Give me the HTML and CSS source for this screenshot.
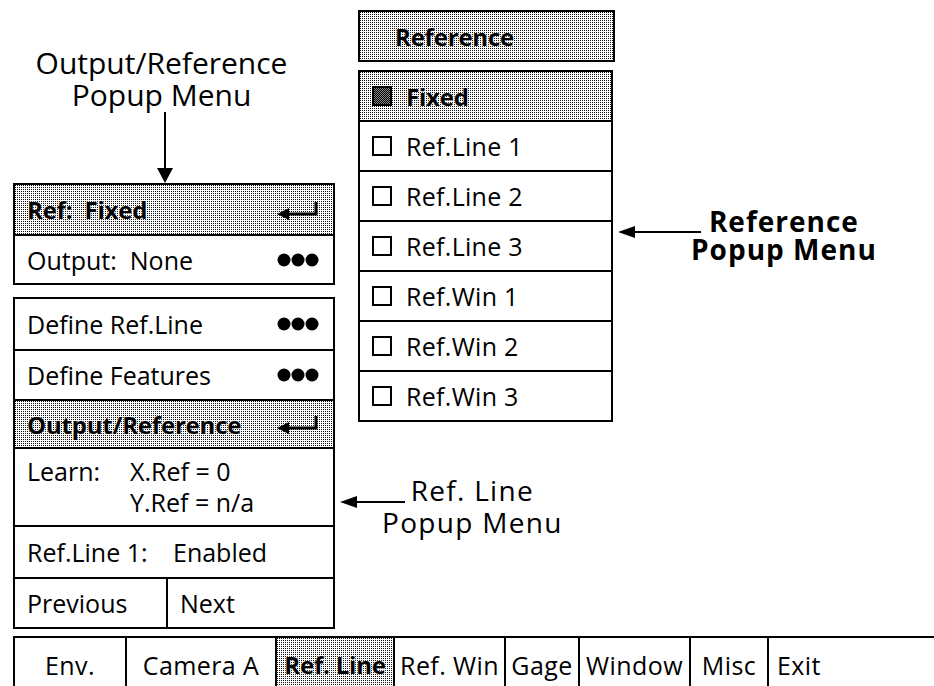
FILE: index.html
```html
<!DOCTYPE html>
<html>
<head>
<meta charset="utf-8">
<link rel="stylesheet" href="styles.css">
</head>
<body>
<div class="page">
  <div class="top">
    <div class="left">
      <div class="label-top">Output/Reference<br>Popup Menu</div>
      <svg class="down-arrow" width="16" height="71" viewBox="0 0 16 71"><path d="M8 0V58" stroke="#000" stroke-width="2"/><path d="M0 56H16L8 71Z"/></svg>
      <div class="panel">
        <div class="row shade bold h47"><span>Ref:&nbsp; Fixed</span>
          <svg class="ret" width="44" height="22" viewBox="0 0 44 22"><path d="M10 15H39V3" fill="none" stroke="#000" stroke-width="3"/><path d="M0 15L12 9V21Z"/></svg>
        </div>
        <div class="row sep h47"><span>Output:&nbsp; None</span>
          <svg class="dots" width="42" height="14" viewBox="0 0 42 14"><circle cx="7" cy="7" r="6.5"/><circle cx="21" cy="7" r="6.5"/><circle cx="35" cy="7" r="6.5"/></svg>
        </div>
      </div>
      <div class="panel p2">
        <div class="row h48"><span>Define Ref.Line</span>
          <svg class="dots" width="42" height="14" viewBox="0 0 42 14"><circle cx="7" cy="7" r="6.5"/><circle cx="21" cy="7" r="6.5"/><circle cx="35" cy="7" r="6.5"/></svg>
        </div>
        <div class="row sep h48"><span>Define Features</span>
          <svg class="dots" width="42" height="14" viewBox="0 0 42 14"><circle cx="7" cy="7" r="6.5"/><circle cx="21" cy="7" r="6.5"/><circle cx="35" cy="7" r="6.5"/></svg>
        </div>
        <div class="row sep shade bold h46"><span>Output/Reference</span>
          <svg class="ret" width="44" height="22" viewBox="0 0 44 22"><path d="M10 15H39V3" fill="none" stroke="#000" stroke-width="3"/><path d="M0 15L12 9V21Z"/></svg>
        </div>
        <div class="learn sep">
          <span>Learn:</span><span>X.Ref = 0</span>
          <span></span><span>Y.Ref = n/a</span>
        </div>
        <div class="row start sep h50"><span class="key">Ref.Line 1:</span><span>Enabled</span></div>
        <div class="split sep">
          <div class="half">Previous</div>
          <div class="half">Next</div>
        </div>
      </div>
    </div>
    <div class="mid">
      <div class="ref-head shade bold">Reference</div>
      <div class="menu-row">
        <div class="menu">
          <div class="item shade bold first"><span class="box dark"></span>Fixed</div>
          <div class="item"><span class="box"></span>Ref.Line 1</div>
          <div class="item"><span class="box"></span>Ref.Line 2</div>
          <div class="item"><span class="box"></span>Ref.Line 3</div>
          <div class="item"><span class="box"></span>Ref.Win 1</div>
          <div class="item"><span class="box"></span>Ref.Win 2</div>
          <div class="item"><span class="box"></span>Ref.Win 3</div>
        </div>
        <div class="callout callout-ref">
          <svg class="h-arrow" width="83" height="14" viewBox="0 0 83 14"><path d="M12 7H83" stroke="#000" stroke-width="2"/><path d="M0 7L17 1V13Z"/></svg>
          <div class="callout-text bold">Reference<br>Popup Menu</div>
        </div>
      </div>
      <div class="callout callout-line">
        <svg class="h-arrow" width="65" height="14" viewBox="0 0 65 14"><path d="M12 7H65" stroke="#000" stroke-width="2"/><path d="M0 7L17 1V13Z"/></svg>
        <div class="callout-text">Ref. Line<br>Popup Menu</div>
      </div>
    </div>
  </div>
  <div class="tabs">
    <div class="tab">Env.</div>
    <div class="tab">Camera A</div>
    <div class="tab shade bold">Ref. Line</div>
    <div class="tab">Ref. Win</div>
    <div class="tab">Gage</div>
    <div class="tab">Window</div>
    <div class="tab">Misc</div>
    <div class="tab exit">Exit</div>
  </div>
</div>
</body>
</html>
```

FILE: styles.css
```css
html, body {
  margin: 0;
  padding: 0;
  background: #fff;
  overflow: hidden;
}
body {
  font-family: "Open Sans", "Liberation Sans", sans-serif;
  font-size: 25px;
  font-weight: 500;
  color: #000;
  width: 934px;
  height: 686px;
}
* { box-sizing: border-box; }

.shade {
  background-color: #fff;
  background-image: conic-gradient(from 270deg at 1px 1px, #111 90deg, #fff 0);
  background-size: 2px 2px;
}
.bold {
  font-weight: 700;
  font-size: 24px;
  letter-spacing: -0.2px;
  text-shadow: 0 0 1px #fff, 0 0 1px #fff;
}

.top {
  display: flex;
  padding-left: 13px;
  height: 636px;
}

.left {
  width: 322px;
  display: flex;
  flex-direction: column;
}
.label-top {
  width: 297px;
  text-align: center;
  font-size: 30px;
  line-height: 32px;
  padding-top: 47px;
  height: 112px;
}
.down-arrow {
  display: block;
  margin-left: 144px;
}

.panel {
  border: 2px solid #000;
  width: 322px;
}
.p2 { margin-top: 12px; }

.row {
  display: flex;
  align-items: center;
  justify-content: space-between;
  padding: 0 14px 0 12px;
}
.row.start { justify-content: flex-start; }
.key { width: 146px; }
.sep { border-top: 2px solid #000; }
.h46 { height: 48px; }
.h47 { height: 49px; }
.h48 { height: 50px; }
.h50 { height: 52px; }
.ret { margin-right: -2px; }

.learn {
  display: grid;
  grid-template-columns: 103px 1fr;
  align-content: center;
  padding: 0 12px;
  height: 78px;
  line-height: 31px;
}

.split {
  display: flex;
  height: 50px;
}
.half {
  display: flex;
  align-items: center;
  padding-left: 12px;
}
.half:first-child {
  width: 153px;
  border-right: 2px solid #000;
}

.mid {
  display: flex;
  flex-direction: column;
  padding-top: 10px;
}
.ref-head {
  margin-left: 23px;
  width: 257px;
  height: 52px;
  border: 2px solid #000;
  display: flex;
  align-items: center;
  padding-left: 35px;
}
.menu-row {
  display: flex;
  margin-top: 8px;
  margin-left: 23px;
}
.menu {
  width: 255px;
  border: 2px solid #000;
  letter-spacing: 0.3px;
}
.item {
  display: flex;
  align-items: center;
  height: 50px;
  border-top: 2px solid #000;
  padding-left: 12px;
}
.item.first {
  border-top: none;
  height: 48px;
}
.box {
  width: 20px;
  height: 20px;
  border: 2px solid #000;
  margin-right: 14px;
  flex: none;
}
.box.dark {
  background-image: repeating-conic-gradient(#000 0 25%, #888 0 50%);
  background-size: 2px 2px;
}

.callout {
  display: flex;
  align-items: flex-start;
}
.h-arrow {
  flex: none;
}
.callout-text {
  text-align: center;
}
.callout-ref {
  margin-top: 150px;
  margin-left: 5px;
}
.callout-ref .h-arrow { margin-top: 5px; }
.callout-ref .callout-text {
  margin-left: -10px;
  margin-top: -13px;
  font-size: 28px;
  line-height: 28px;
  letter-spacing: 1px;
  text-shadow: none;
}

.callout-line {
  margin-top: 57px;
  margin-left: 5px;
}
.callout-line .h-arrow { margin-top: 16px; }
.callout-line .callout-text {
  margin-left: -23px;
  margin-top: -5px;
  font-size: 28px;
  line-height: 32px;
  letter-spacing: 1.3px;
}

.tabs {
  display: grid;
  grid-template-columns: 112px 150px 118px 111px 74px 111px 78px 200px;
  margin-left: 13px;
  border-top: 2px solid #000;
  height: 60px;
  width: 960px;
  font-size: 25px;
  letter-spacing: 0.4px;
}
.tab {
  border-left: 2px solid #000;
  display: flex;
  align-items: flex-start;
  justify-content: center;
  padding-top: 10px;
}
.tab.bold { font-size: 24px; }
.tab.exit {
  justify-content: flex-start;
  padding-left: 8px;
}
```
